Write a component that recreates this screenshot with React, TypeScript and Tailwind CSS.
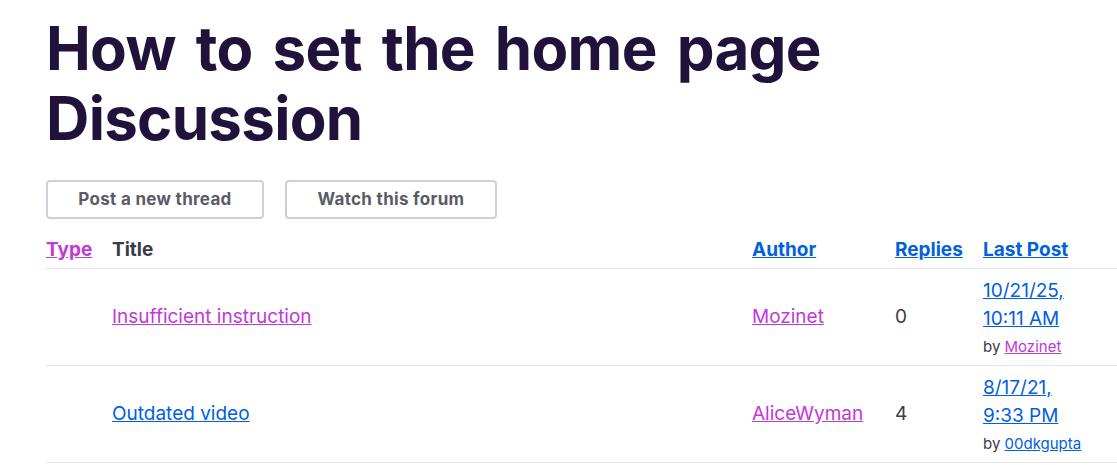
import React from "react";

const purple = "text-[#c139d6]";
const blue = "text-[#0060df]";

type Thread = {
  title: string;
  titleVisited: boolean;
  author: string;
  replies: number;
  date: string;
  time: string;
  by: string;
  byVisited: boolean;
};

const threads: Thread[] = [
  {
    title: "Insufficient instruction",
    titleVisited: true,
    author: "Mozinet",
    replies: 0,
    date: "10/21/25,",
    time: "10:11 AM",
    by: "Mozinet",
    byVisited: true,
  },
  {
    title: "Outdated video",
    titleVisited: false,
    author: "AliceWyman",
    replies: 4,
    date: "8/17/21,",
    time: "9:33 PM",
    by: "00dkgupta",
    byVisited: false,
  },
];

export default function App() {
  return (
    <div className="min-h-screen bg-white pl-[46px] font-['Inter',sans-serif] overflow-hidden">
      <h1 className="pt-[13px] text-[60px] leading-[70px] font-bold tracking-[-0.7px] [word-spacing:6.5px] text-[#20123a]">
        How to set the home page
        <br />
        Discussion
      </h1>

      <div className="mt-[27px] flex gap-[21px]">
        <button className="h-[39px] w-[218px] rounded border-2 border-[#cfcfd8] text-[17px] font-bold tracking-[0.3px] text-[#5b5b66]">
          Post a new thread
        </button>
        <button className="h-[39px] w-[212px] rounded border-2 border-[#cfcfd8] text-[17px] font-bold tracking-[0.3px] text-[#5b5b66]">
          Watch this forum
        </button>
      </div>

      <table className="mt-[13px] w-[1100px] border-collapse text-left text-[19px] leading-[28px] text-[#3b3b42]">
        <thead>
          <tr className="border-b border-[#e5e5ea]">
            <th className="w-[66px] py-[4px] font-bold">
              <a href="#" className={`${purple} underline`}>Type</a>
            </th>
            <th className="w-[640px] py-[4px] font-bold text-[#3b3b48]">Title</th>
            <th className="w-[143px] py-[4px] font-bold">
              <a href="#" className={`${blue} underline`}>Author</a>
            </th>
            <th className="w-[88px] py-[4px] font-bold">
              <a href="#" className={`${blue} underline`}>Replies</a>
            </th>
            <th className="py-[4px] font-bold">
              <a href="#" className={`${blue} underline`}>Last Post</a>
            </th>
          </tr>
        </thead>
        <tbody>
          {threads.map((t) => (
            <tr key={t.title} className="border-b border-[#e5e5ea]">
              <td className="py-2"></td>
              <td className="py-2 align-middle">
                <a href="#" className={`${t.titleVisited ? purple : blue} underline`}>{t.title}</a>
              </td>
              <td className="py-2 align-middle">
                <a href="#" className={`${purple} underline`}>{t.author}</a>
              </td>
              <td className="py-2 align-middle">{t.replies}</td>
              <td className="py-2 align-top">
                <a href="#" className={`${blue} underline`}>
                  {t.date}
                  <br />
                  {t.time}
                </a>
                <div className="mt-[3px] text-[15px] leading-[21px] text-[#3b3b42]">
                  by{" "}
                  <a href="#" className={`${t.byVisited ? purple : blue} underline`}>{t.by}</a>
                </div>
              </td>
            </tr>
          ))}
        </tbody>
      </table>
    </div>
  );
}
